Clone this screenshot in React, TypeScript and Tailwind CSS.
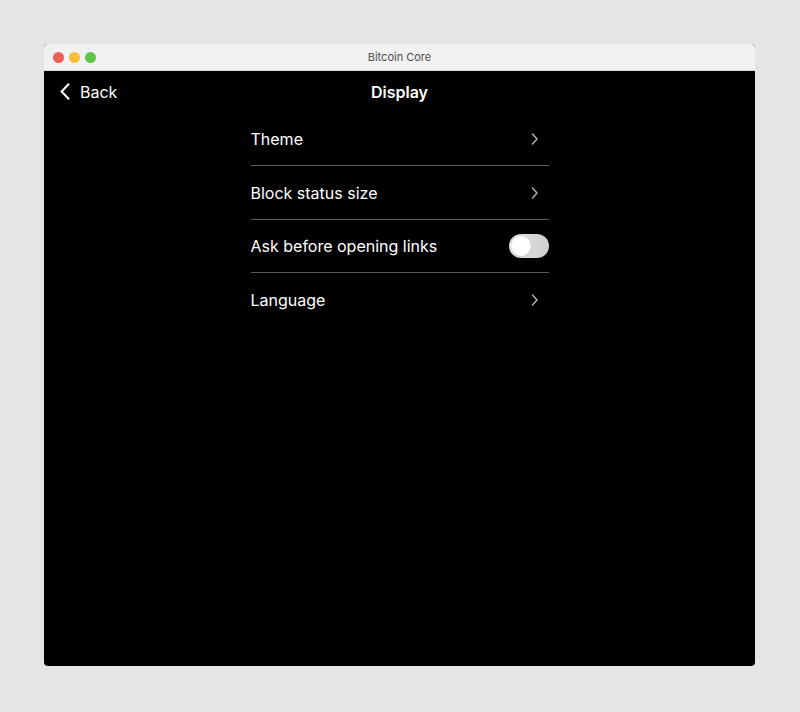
const rows = [
  { label: "Theme", kind: "link", h: "h-[54px]" },
  { label: "Block status size", kind: "link", h: "h-[54px]" },
  { label: "Ask before opening links", kind: "toggle", h: "h-[53px]" },
  { label: "Language", kind: "link", h: "h-[54px]" },
];

function Toggle() {
  return (
    <div className="w-[40px] h-[24px] rounded-full bg-gradient-to-r from-[#e2e2e2] to-[#cfcfcf] flex items-center px-[2px]">
      <div className="w-[20px] h-[20px] rounded-full bg-white shadow" />
    </div>
  );
}

function RowChevron() {
  return (
    <svg width="8" height="12" viewBox="0 0 8 12" className="mr-[10px]">
      <polyline points="1.5,1 6,6 1.5,11" fill="none" stroke="#b4b4b4" strokeWidth="1.4" strokeLinecap="round" strokeLinejoin="round" />
    </svg>
  );
}

export default function App() {
  return (
    <div
      className="w-[800px] h-[712px] bg-[#e5e5e5] pt-[44px] pl-[44px]"
      style={{ fontFamily: "Inter, 'Noto Sans', sans-serif" }}
    >
      <div className="w-[711px] h-[622px] rounded-[4px] overflow-hidden flex flex-col bg-black">
        {/* title bar */}
        <div className="h-[27px] bg-[#f1f1f1] border-b border-[#d6d6d6] flex items-center relative">
          <div className="flex gap-[5px] pl-[9px]">
            <span className="w-[11px] h-[11px] rounded-full bg-[#ee5f57]" />
            <span className="w-[11px] h-[11px] rounded-full bg-[#f6bd3c]" />
            <span className="w-[11px] h-[11px] rounded-full bg-[#5fc44a]" />
          </div>
          <div className="absolute inset-0 flex items-center justify-center text-[11px] text-[#4d4d4d]">
            Bitcoin Core
          </div>
        </div>

        {/* header */}
        <div className="h-[41px] flex items-center relative text-white">
          <div className="flex items-center pl-[16px] gap-[10px] text-[16px]">
            <svg width="10" height="17" viewBox="0 0 10 17">
              <polyline points="8.5,1.2 1.6,8.5 8.5,15.8" fill="none" stroke="white" strokeWidth="2" strokeLinecap="round" strokeLinejoin="round" />
            </svg>
            <span>Back</span>
          </div>
          <div className="absolute inset-0 flex items-center justify-center text-[16px] font-semibold">
            Display
          </div>
        </div>

        {/* list */}
        <div className="w-[298px] mx-auto">
          {rows.map((row, i) => (
            <div
              key={row.label}
              className={`${row.h} flex items-center justify-between text-white text-[16px] ${
                i < rows.length - 1 ? "border-b border-[#5c5c5c]" : ""
              }`}
            >
              <span>{row.label}</span>
              {row.kind === "toggle" ? <Toggle /> : <RowChevron />}
            </div>
          ))}
        </div>
      </div>
    </div>
  );
}
